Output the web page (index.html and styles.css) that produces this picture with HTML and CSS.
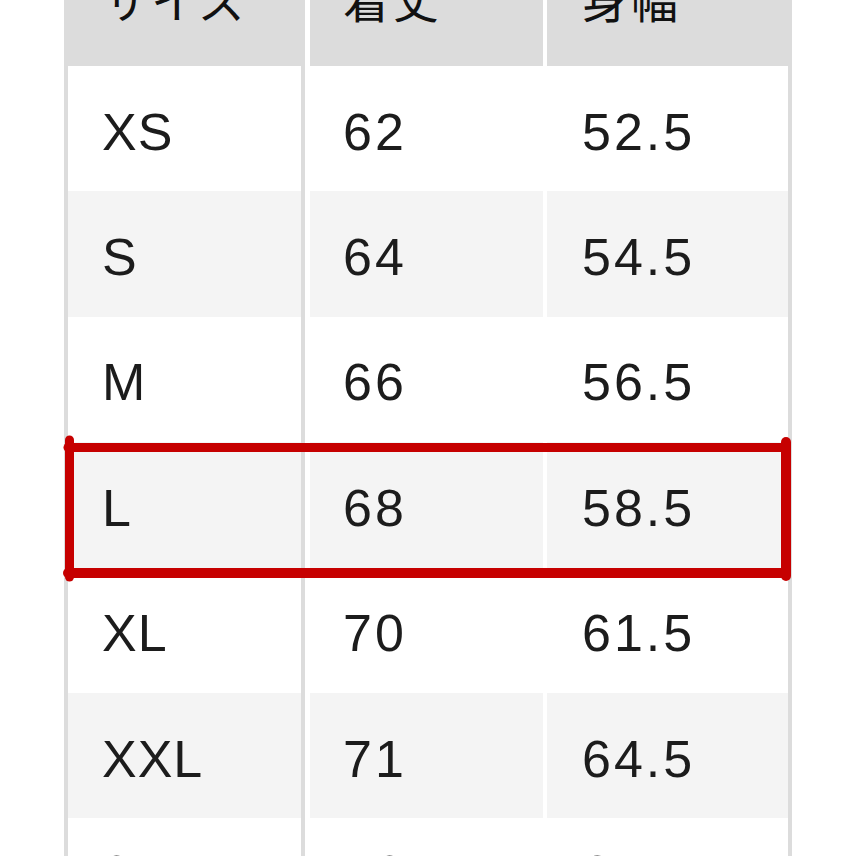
FILE: index.html
```html
<!DOCTYPE html>
<html lang="ja">
<head>
<meta charset="utf-8">
<title>サイズ表</title>
<link rel="stylesheet" href="styles.css">
</head>
<body>
<div class="sheet">
  <div class="chart">
    <div class="row head">
      <div class="cell c1">サイズ</div>
      <div class="cell c2">着丈</div>
      <div class="cell c3">身幅</div>
    </div>
    <div class="row">
      <div class="cell c1">XS</div>
      <div class="cell c2 num">62</div>
      <div class="cell c3 num">52.5</div>
    </div>
    <div class="row alt">
      <div class="cell c1">S</div>
      <div class="cell c2 num">64</div>
      <div class="cell c3 num">54.5</div>
    </div>
    <div class="row">
      <div class="cell c1">M</div>
      <div class="cell c2 num">66</div>
      <div class="cell c3 num">56.5</div>
    </div>
    <div class="row alt">
      <div class="cell c1">L</div>
      <div class="cell c2 num">68</div>
      <div class="cell c3 num">58.5</div>
    </div>
    <div class="row">
      <div class="cell c1">XL</div>
      <div class="cell c2 num">70</div>
      <div class="cell c3 num">61.5</div>
    </div>
    <div class="row alt">
      <div class="cell c1">XXL</div>
      <div class="cell c2 num">71</div>
      <div class="cell c3 num">64.5</div>
    </div>
    <div class="row last">
      <div class="cell c1">3XL</div>
      <div class="cell c2 num">73</div>
      <div class="cell c3 num">67.5</div>
    </div>
  </div>
  <svg class="mark" width="856" height="856" viewBox="0 0 856 856" aria-hidden="true">
    <g stroke="#c60000" stroke-linecap="round" fill="none">
      <line x1="68" y1="447.5" x2="786" y2="447.5" stroke-width="9"/>
      <line x1="68" y1="573" x2="786" y2="573" stroke-width="10"/>
      <line x1="69.5" y1="440" x2="69.5" y2="577" stroke-width="9"/>
      <line x1="786" y1="442" x2="786" y2="576" stroke-width="10"/>
    </g>
  </svg>
</div>
</body>
</html>
```

FILE: styles.css
```css
html, body {
  margin: 0;
  padding: 0;
  background: #ffffff;
}

body {
  width: 856px;
  height: 856px;
  overflow: hidden;
  font-family: "Liberation Sans", Arial, "Noto Sans CJK JP", sans-serif;
  color: #1c1c1c;
}

.sheet {
  position: relative;
  width: 856px;
  height: 856px;
  overflow: hidden;
}

.chart {
  margin-top: -59px;
  margin-left: 64px;
  border-left: 4px solid #dcdcdc;
  display: flex;
  flex-direction: column;
}

.row {
  display: flex;
  height: 125.4px;
}

.head {
  height: 125px;
}

.cell {
  box-sizing: border-box;
  display: flex;
  align-items: center;
  font-size: 52px;
  letter-spacing: 1px;
  background: #ffffff;
  padding-top: 6px;
}

.num {
  letter-spacing: 3px;
}

.c1 {
  width: 237px;
  padding-left: 34px;
  border-right: 4px solid #dcdcdc;
  margin-right: 5px;
}

.c2 {
  width: 233px;
  padding-left: 33px;
  margin-right: 4px;
}

.c3 {
  width: 245px;
  padding-left: 35px;
  border-right: 4px solid #dcdcdc;
}

.alt .cell {
  background: #f4f4f4;
}

.last .cell {
  padding-top: 0;
  padding-bottom: 14px;
}

.head .cell {
  background: #dcdcdc;
  font-family: "Noto Sans CJK JP", sans-serif;
  font-size: 47px;
  letter-spacing: 2px;
  color: #111111;
  padding-top: 0;
  padding-bottom: 12px;
}

.mark {
  position: absolute;
  left: 0;
  top: 0;
}
```
